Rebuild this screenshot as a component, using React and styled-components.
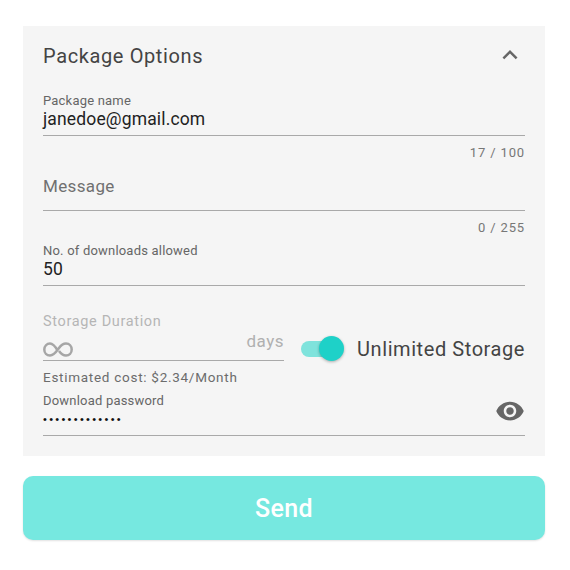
import React from 'react'
import styled, { createGlobalStyle } from 'styled-components'

const GlobalStyle = createGlobalStyle`
  html, body {
    margin: 0;
    padding: 0;
    background: #fff;
  }
  body {
    font-family: Roboto, "Liberation Sans", sans-serif;
  }
`

const Page = styled.div`
  width: 570px;
  height: 570px;
  padding: 26px 25px 0 23px;
  box-sizing: border-box;
  display: flex;
  flex-direction: column;
  gap: 20px;
  overflow: hidden;
`

const Panel = styled.section`
  background: #f5f5f5;
  height: 430px;
  padding: 0 20px;
  box-sizing: border-box;
  display: flex;
  flex-direction: column;
`

const Header = styled.header`
  height: 64px;
  display: flex;
  align-items: center;
  justify-content: space-between;
  padding-bottom: 4px;
  box-sizing: border-box;
`

const Title = styled.h2`
  margin: 0;
  font-size: 20px;
  font-weight: 400;
  letter-spacing: 0.62px;
  color: #444;
`

const Chevron = styled.svg`
  margin: -2px 0 0 0;
`

const Field = styled.div`
  height: ${p => p.$height || 46}px;
  flex-shrink: 0;
  box-sizing: border-box;
  border-bottom: 1px solid #a9a9a9;
  display: flex;
  flex-direction: column;
  justify-content: flex-end;
  padding-bottom: ${p => p.$pad || 6}px;
  position: relative;
`

const Label = styled.label`
  font-size: 13px;
  line-height: 16px;
  letter-spacing: 0.2px;
  color: #666;
`

const Value = styled.div`
  font-size: 17.5px;
  line-height: 20px;
  letter-spacing: 0.15px;
  color: #222;
`

const Placeholder = styled.div`
  font-size: 17px;
  line-height: 20px;
  letter-spacing: 0.35px;
  color: #707070;
  padding-bottom: 8px;
`

const Counter = styled.div`
  height: 29px;
  padding-top: 7.5px;
  box-sizing: border-box;
  text-align: right;
  font-size: 13px;
  line-height: 18px;
  letter-spacing: 0.85px;
  color: #777;
`

const StorageRow = styled.div`
  display: flex;
  margin-top: 27px;
  height: 48px;
  align-items: flex-end;
  justify-content: space-between;
`

const StorageColumn = styled.div`
  width: 241px;
  display: flex;
  flex-direction: column;
`

const StorageLabel = styled.div`
  font-size: 14.5px;
  line-height: 14px;
  letter-spacing: 0.65px;
  color: #b5b5b5;
`

const StorageInput = styled.div`
  height: 32px;
  box-sizing: border-box;
  border-bottom: 1px solid #a9a9a9;
  display: flex;
  justify-content: space-between;
  align-items: flex-end;
`

const InfinityIcon = styled.svg`
  margin-bottom: 3px;
`

const Days = styled.span`
  font-size: 17px;
  line-height: 20px;
  letter-spacing: 0.5px;
  color: #b0b0b0;
  padding-bottom: 9px;
`

const ToggleGroup = styled.div`
  display: flex;
  align-items: center;
  gap: 14px;
  height: 26px;
  margin-bottom: -1px;
`

const Track = styled.div`
  width: 42px;
  height: 20px;
  position: relative;
`

const TrackBar = styled.div`
  position: absolute;
  left: 0;
  top: 2px;
  width: 36px;
  height: 16px;
  border-radius: 8px;
  background: #7fe3dc;
`

const Thumb = styled.div`
  position: absolute;
  right: -1px;
  top: -3px;
  width: 25px;
  height: 25px;
  border-radius: 50%;
  background: #1ed1c8;
  box-shadow: 0 1px 3px rgba(0, 0, 0, 0.3);
`

const ToggleText = styled.span`
  font-size: 20px;
  letter-spacing: 0.57px;
  color: #444;
`

const Estimate = styled.div`
  margin-top: 8px;
  font-size: 13.5px;
  line-height: 17px;
  letter-spacing: 0.72px;
  color: #6c6c6c;
`

const Dots = styled.div`
  margin-top: 2px;
  font-family: "Liberation Sans", sans-serif;
  font-size: 11px;
  line-height: 16px;
  letter-spacing: 2.3px;
  color: #111;
`

const EyeButton = styled.span`
  position: absolute;
  right: 0;
  top: 10px;
  display: flex;
`

const SendButton = styled.button`
  height: 64px;
  border: 0;
  border-radius: 10px;
  background: #76e8e0;
  color: #fff;
  font-family: inherit;
  font-size: 25px;
  font-weight: 500;
  letter-spacing: 0.4px;
  box-shadow: 0 1px 2px rgba(0, 0, 0, 0.12);
`

const App = () => (
  <>
    <GlobalStyle />
    <Page>
      <Panel>
        <Header>
          <Title>Package Options</Title>
          <Chevron width="30" height="30" viewBox="0 0 24 24" fill="#666">
            <path d="M12 8l-6 6 1.41 1.41L12 10.83l4.59 4.58L18 14z" />
          </Chevron>
        </Header>
        <Field>
          <Label>Package name</Label>
          <Value>janedoe@gmail.com</Value>
        </Field>
        <Counter>17 / 100</Counter>
        <Field>
          <Placeholder>Message</Placeholder>
        </Field>
        <Counter>0 / 255</Counter>
        <Field>
          <Label>No. of downloads allowed</Label>
          <Value>50</Value>
        </Field>
        <StorageRow>
          <StorageColumn>
            <StorageLabel>Storage Duration</StorageLabel>
            <StorageInput>
              <InfinityIcon width="30" height="15" viewBox="0 0 30 15" fill="none" stroke="#a6a6a6" strokeWidth="2.5">
                <path d="M14.5 8.5C12 4 10 1.5 7 1.5C3.8 1.5 1.3 4.2 1.3 7.5C1.3 10.9 3.8 13.5 7 13.5C11 13.5 13.5 9.5 16 6C18 3.2 20 1.5 23 1.5C26.4 1.5 28.7 4.2 28.7 7.5C28.7 10.9 26.2 13.5 23 13.5C20 13.5 18 11.8 16 9" />
              </InfinityIcon>
              <Days>days</Days>
            </StorageInput>
          </StorageColumn>
          <ToggleGroup>
            <Track>
              <TrackBar />
              <Thumb />
            </Track>
            <ToggleText>Unlimited Storage</ToggleText>
          </ToggleGroup>
        </StorageRow>
        <Estimate>Estimated cost: $2.34/Month</Estimate>
        <Field $height={50} $pad={8}>
          <Label>Download password</Label>
          <Dots>•••••••••••••</Dots>
          <EyeButton>
            <svg width="30" height="30" viewBox="0 0 24 24" fill="#666">
              <path d="M12 4.5C7 4.5 2.73 7.61 1 12c1.73 4.39 6 7.5 11 7.5s9.27-3.11 11-7.5c-1.73-4.39-6-7.5-11-7.5zM12 17c-2.76 0-5-2.24-5-5s2.24-5 5-5 5 2.24 5 5-2.24 5-5 5zm0-8c-1.66 0-3 1.34-3 3s1.34 3 3 3 3-1.34 3-3-1.34-3-3-3z" />
            </svg>
          </EyeButton>
        </Field>
      </Panel>
      <SendButton>Send</SendButton>
    </Page>
  </>
)

export default App
